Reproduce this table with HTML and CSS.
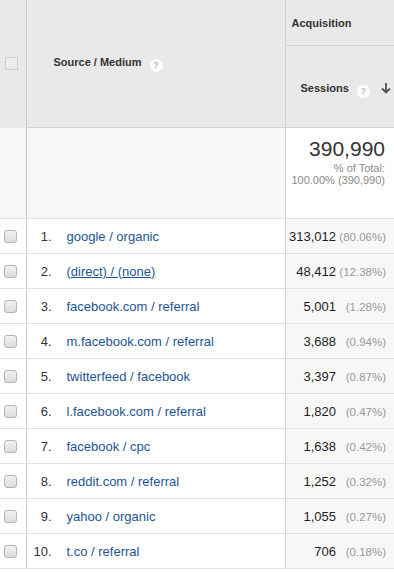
FILE: index.html
```html
<!DOCTYPE html>
<html>
<head>
<meta charset="utf-8">
<link rel="stylesheet" href="styles.css">
</head>
<body>
<table class="report">
  <colgroup>
    <col class="c-check">
    <col class="c-dim">
    <col class="c-metric">
  </colgroup>
  <thead>
    <tr class="h-group">
      <th class="h-check" rowspan="2"><span class="hbox"></span></th>
      <th class="h-dim" rowspan="2">Source / Medium <span class="help">?</span></th>
      <th class="h-acq">Acquisition</th>
    </tr>
    <tr class="h-metric">
      <th class="h-sess">Sessions <span class="help">?</span> <span class="sort"><svg width="10" height="12" viewBox="0 0 10 12"><path d="M5 1v9.5M1 6.5l4 4 4-4" fill="none" stroke="#555" stroke-width="1.8"/></svg></span></th>
    </tr>
  </thead>
  <tbody>
    <tr class="total">
      <td class="t-check"></td>
      <td class="t-dim"></td>
      <td class="t-metric">
        <div class="big">390,990</div>
        <div class="sub">% of Total:<br>100.00% (390,990)</div>
      </td>
    </tr>
    <tr><td class="cb"><span class="box"></span></td><td class="dim"><span class="idx">1.</span><a>google / organic</a></td><td class="met"><b>313,012</b><span class="pct">(80.06%)</span></td></tr>
    <tr><td class="cb"><span class="box"></span></td><td class="dim"><span class="idx">2.</span><a class="u">(direct) / (none)</a></td><td class="met"><b>48,412</b><span class="pct">(12.38%)</span></td></tr>
    <tr><td class="cb"><span class="box"></span></td><td class="dim"><span class="idx">3.</span><a>facebook.com / referral</a></td><td class="met"><b>5,001</b><span class="pct">(1.28%)</span></td></tr>
    <tr><td class="cb"><span class="box"></span></td><td class="dim"><span class="idx">4.</span><a>m.facebook.com / referral</a></td><td class="met"><b>3,688</b><span class="pct">(0.94%)</span></td></tr>
    <tr><td class="cb"><span class="box"></span></td><td class="dim"><span class="idx">5.</span><a>twitterfeed / facebook</a></td><td class="met"><b>3,397</b><span class="pct">(0.87%)</span></td></tr>
    <tr><td class="cb"><span class="box"></span></td><td class="dim"><span class="idx">6.</span><a>l.facebook.com / referral</a></td><td class="met"><b>1,820</b><span class="pct">(0.47%)</span></td></tr>
    <tr><td class="cb"><span class="box"></span></td><td class="dim"><span class="idx">7.</span><a>facebook / cpc</a></td><td class="met"><b>1,638</b><span class="pct">(0.42%)</span></td></tr>
    <tr><td class="cb"><span class="box"></span></td><td class="dim"><span class="idx">8.</span><a>reddit.com / referral</a></td><td class="met"><b>1,252</b><span class="pct">(0.32%)</span></td></tr>
    <tr><td class="cb"><span class="box"></span></td><td class="dim"><span class="idx">9.</span><a>yahoo / organic</a></td><td class="met"><b>1,055</b><span class="pct">(0.27%)</span></td></tr>
    <tr><td class="cb"><span class="box"></span></td><td class="dim"><span class="idx">10.</span><a>t.co / referral</a></td><td class="met"><b>706</b><span class="pct">(0.18%)</span></td></tr>
  </tbody>
</table>
</body>
</html>
```

FILE: styles.css
```css
html, body {
  margin: 0;
  padding: 0;
  background: #fff;
  font-family: "Liberation Sans", Arial, sans-serif;
  color: #333;
}
.report {
  border-collapse: collapse;
  table-layout: fixed;
  width: 394px;
}
.c-check { width: 26px; }
.c-dim { width: 259px; }
.c-metric { width: 109px; }

th {
  background: #e9e9e9;
  font-size: 11px;
  font-weight: bold;
  color: #333;
  text-align: left;
  padding: 0;
}
.h-check {
  border-right: 1px solid #c8c8c8;
  text-align: left;
  vertical-align: middle;
  height: 127px;
}
.hbox {
  display: block;
  width: 11px;
  height: 11px;
  margin-left: 5px;
  border: 1px solid #cfcfcf;
  background: #ececec;
}
.h-dim {
  padding-left: 27px;
  vertical-align: middle;
  border-bottom: 1px solid #d3d3d3;
}
.h-acq {
  height: 45px;
  border-left: 1px solid #d0d0d0;
  border-bottom: 1px solid #d3d3d3;
  padding-left: 6px;
  vertical-align: middle;
}
.h-sess {
  height: 75px;
  border-left: 1px solid #d0d0d0;
  border-bottom: 1px solid #d3d3d3;
  padding: 6px 0 0 15px;
  vertical-align: middle;
  white-space: nowrap;
}
.help {
  display: inline-block;
  width: 13px;
  height: 13px;
  border-radius: 50%;
  background: #fff;
  color: #b8b8b8;
  font-size: 9px;
  font-weight: bold;
  text-align: center;
  line-height: 13px;
  margin-left: 5px;
  vertical-align: -2px;
}
.sort {
  display: inline-block;
  margin-left: 8px;
  vertical-align: -2px;
}
.sort svg { display: block; }

.total td {
  height: 90px;
  border-bottom: 1px solid #e2e2e2;
  padding: 0;
}
.t-check {
  background: #f7f7f7;
  border-right: 1px solid #c8c8c8;
}
.t-dim { background: #f7f7f7; }
.t-metric {
  background: #fff;
  border-left: 1px solid #d0d0d0;
  text-align: right;
  vertical-align: top;
  padding-right: 9px !important;
}
.big {
  font-size: 21px;
  color: #333;
  margin-top: 9px;
  line-height: 24px;
}
.sub {
  font-size: 11px;
  color: #8a8a8a;
  line-height: 12px;
  margin-top: 1px;
}

tbody tr td.cb, tbody tr td.dim, tbody tr td.met {
  height: 34px;
  border-bottom: 1px solid #e2e2e2;
  padding: 0;
  vertical-align: middle;
}
.cb {
  border-right: 1px solid #c8c8c8;
  background: #fff;
}
.box {
  display: block;
  width: 11px;
  height: 11px;
  margin-left: 4px;
  border: 1px solid #b4b4b4;
  border-radius: 3px;
  background: linear-gradient(#f2f2f2, #dcdcdc);
}
.dim {
  font-size: 13px;
  white-space: nowrap;
}
.idx {
  display: inline-block;
  width: 25px;
  text-align: right;
  color: #333;
  margin-right: 15px;
}
.dim a {
  color: #1e5494;
  text-decoration: none;
}
.dim a.u { text-decoration: underline; }
.met {
  background: #f7f7f7;
  border-left: 1px solid #d0d0d0;
  text-align: right;
  padding-right: 8px !important;
  white-space: nowrap;
}
.met b {
  font-size: 13px;
  font-weight: normal;
  color: #1e1e1e;
}
.pct {
  display: inline-block;
  width: 50px;
  text-align: right;
  font-size: 11.5px;
  color: #999;
}
```
